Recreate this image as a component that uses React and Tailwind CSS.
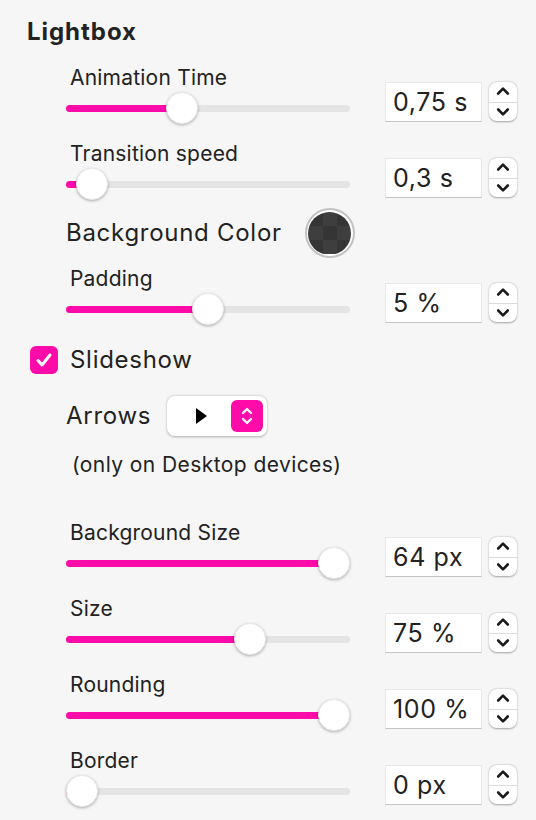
import React from "react";

const PINK = "bg-[#fe0ba9]";

function Stepper() {
  return (
    <div className="relative ml-[7px] mt-4 flex h-[39px] w-[28px] flex-col items-center justify-between rounded-lg bg-white py-[4px] shadow-[0_0.5px_2px_rgba(0,0,0,0.35)]">
      <svg width="14" height="10" viewBox="0 0 14 10" fill="none" stroke="#1a1a1a" strokeWidth="2.6" strokeLinecap="round" strokeLinejoin="round">
        <path d="M2.2 7.5 L7 2.7 L11.8 7.5" />
      </svg>
      <div className="absolute left-0 right-0 top-1/2 h-px bg-[#dcdcdc]" />
      <svg width="14" height="10" viewBox="0 0 14 10" fill="none" stroke="#1a1a1a" strokeWidth="2.6" strokeLinecap="round" strokeLinejoin="round">
        <path d="M2.2 2.5 L7 7.3 L11.8 2.5" />
      </svg>
    </div>
  );
}

function SliderRow({ label, value, thumb, className = "" }) {
  // thumb = thumb centre, px from the track's left edge
  return (
    <div className={"flex " + className}>
      <div className="ml-[66px] flex w-[284px] flex-col">
        <div className="h-6 pl-1 text-[21px] leading-6 tracking-[0.01em]">{label}</div>
        <div className="relative mt-[2px] h-8">
          <div className="absolute left-0 right-0 top-[12.5px] h-[7px] rounded-full bg-[#e4e4e4]" />
          <div className={"absolute left-0 top-[12.5px] h-[7px] rounded-full " + PINK} style={{ width: thumb }} />
          <div
            className="absolute top-0 h-8 w-8 rounded-full border border-[#ebebeb] bg-white shadow-[0_1px_3px_rgba(0,0,0,0.3)]"
            style={{ left: thumb - 16 }}
          />
        </div>
      </div>
      <div className="ml-[35px] mt-4 flex h-10 w-[97px] items-center border border-[#e8e8e8] border-b-[#c4c4c4] bg-white pl-[7px] pt-[1px] text-[25px] tracking-[0.025em]">
        {value}
      </div>
      <Stepper />
    </div>
  );
}

function ColorWell() {
  return (
    <div className="flex h-[50px] w-[50px] items-center justify-center rounded-full border-2 border-[#c2c2c2] bg-white">
      <div className="grid h-[43px] w-[43px] grid-cols-3 grid-rows-3 overflow-hidden rounded-full">
        <div className="bg-[#353535]" />
        <div className="bg-[#3e3e3e]" />
        <div className="bg-[#353535]" />
        <div className="bg-[#3e3e3e]" />
        <div className="bg-[#353535]" />
        <div className="bg-[#3e3e3e]" />
        <div className="bg-[#353535]" />
        <div className="bg-[#3e3e3e]" />
        <div className="bg-[#353535]" />
      </div>
    </div>
  );
}

export default function App() {
  return (
    <div className="h-[820px] w-[536px] overflow-hidden bg-[#f6f6f6] text-[#222] [font-family:Inter,'Noto_Sans',sans-serif]">
      <div className="pt-[18px]">
        <div className="ml-[27px] h-7 text-[24px] font-bold leading-7 tracking-[0.04em]">Lightbox</div>

        <SliderRow className="mt-[20px]" label="Animation Time" value="0,75 s" thumb={116} />
        <SliderRow className="mt-[18px]" label="Transition speed" value="0,3 s" thumb={26} />

        <div className="mt-2 flex h-[50px] items-center">
          <span className="ml-[66px] text-[24px] tracking-[0.03em]">Background Color</span>
          <div className="ml-[23px]">
            <ColorWell />
          </div>
        </div>

        <SliderRow className="mt-[9px]" label="Padding" value="5 %" thumb={142} />

        <div className="mt-[17px] flex items-center">
          <div className={"ml-[30px] flex h-7 w-7 items-center justify-center rounded-md " + PINK}>
            <svg width="18" height="16" viewBox="0 0 18 16" fill="none" stroke="white" strokeWidth="3" strokeLinecap="round" strokeLinejoin="round">
              <path d="M3 8.5 L7 13 L15 3" />
            </svg>
          </div>
          <span className="ml-3 text-[24px] tracking-[0.03em]">Slideshow</span>
        </div>

        <div className="mt-[18px] flex items-center">
          <span className="ml-[66px] text-[24px] tracking-[0.03em]">Arrows</span>
          <div className="ml-4 flex h-10 w-[100px] items-center rounded-lg bg-white shadow-[0_0.5px_2.5px_rgba(0,0,0,0.3)]">
            <svg className="ml-[28px]" width="13" height="18" viewBox="0 0 13 18">
              <path d="M1 1 L12 9 L1 17 Z" fill="#000" />
            </svg>
            <div className={"ml-auto mr-1 flex h-8 w-8 items-center justify-center rounded-md " + PINK}>
              <svg width="14" height="24" viewBox="0 0 14 24" fill="none" stroke="white" strokeWidth="2.2" strokeLinecap="round" strokeLinejoin="round">
                <path d="M3 9 L7 5 L11 9" />
                <path d="M3 15 L7 19 L11 15" />
              </svg>
            </div>
          </div>
        </div>

        <div className="ml-[72px] mt-[17px] h-6 text-[21px] leading-6 tracking-[0.02em]">(only on Desktop devices)</div>

        <SliderRow className="mt-[44px]" label="Background Size" value="64 px" thumb={268} />
        <SliderRow className="mt-[18px]" label="Size" value="75 %" thumb={184} />
        <SliderRow className="mt-[18px]" label="Rounding" value="100 %" thumb={268} />
        <SliderRow className="mt-[18px]" label="Border" value="0 px" thumb={16} />
      </div>
    </div>
  );
}
